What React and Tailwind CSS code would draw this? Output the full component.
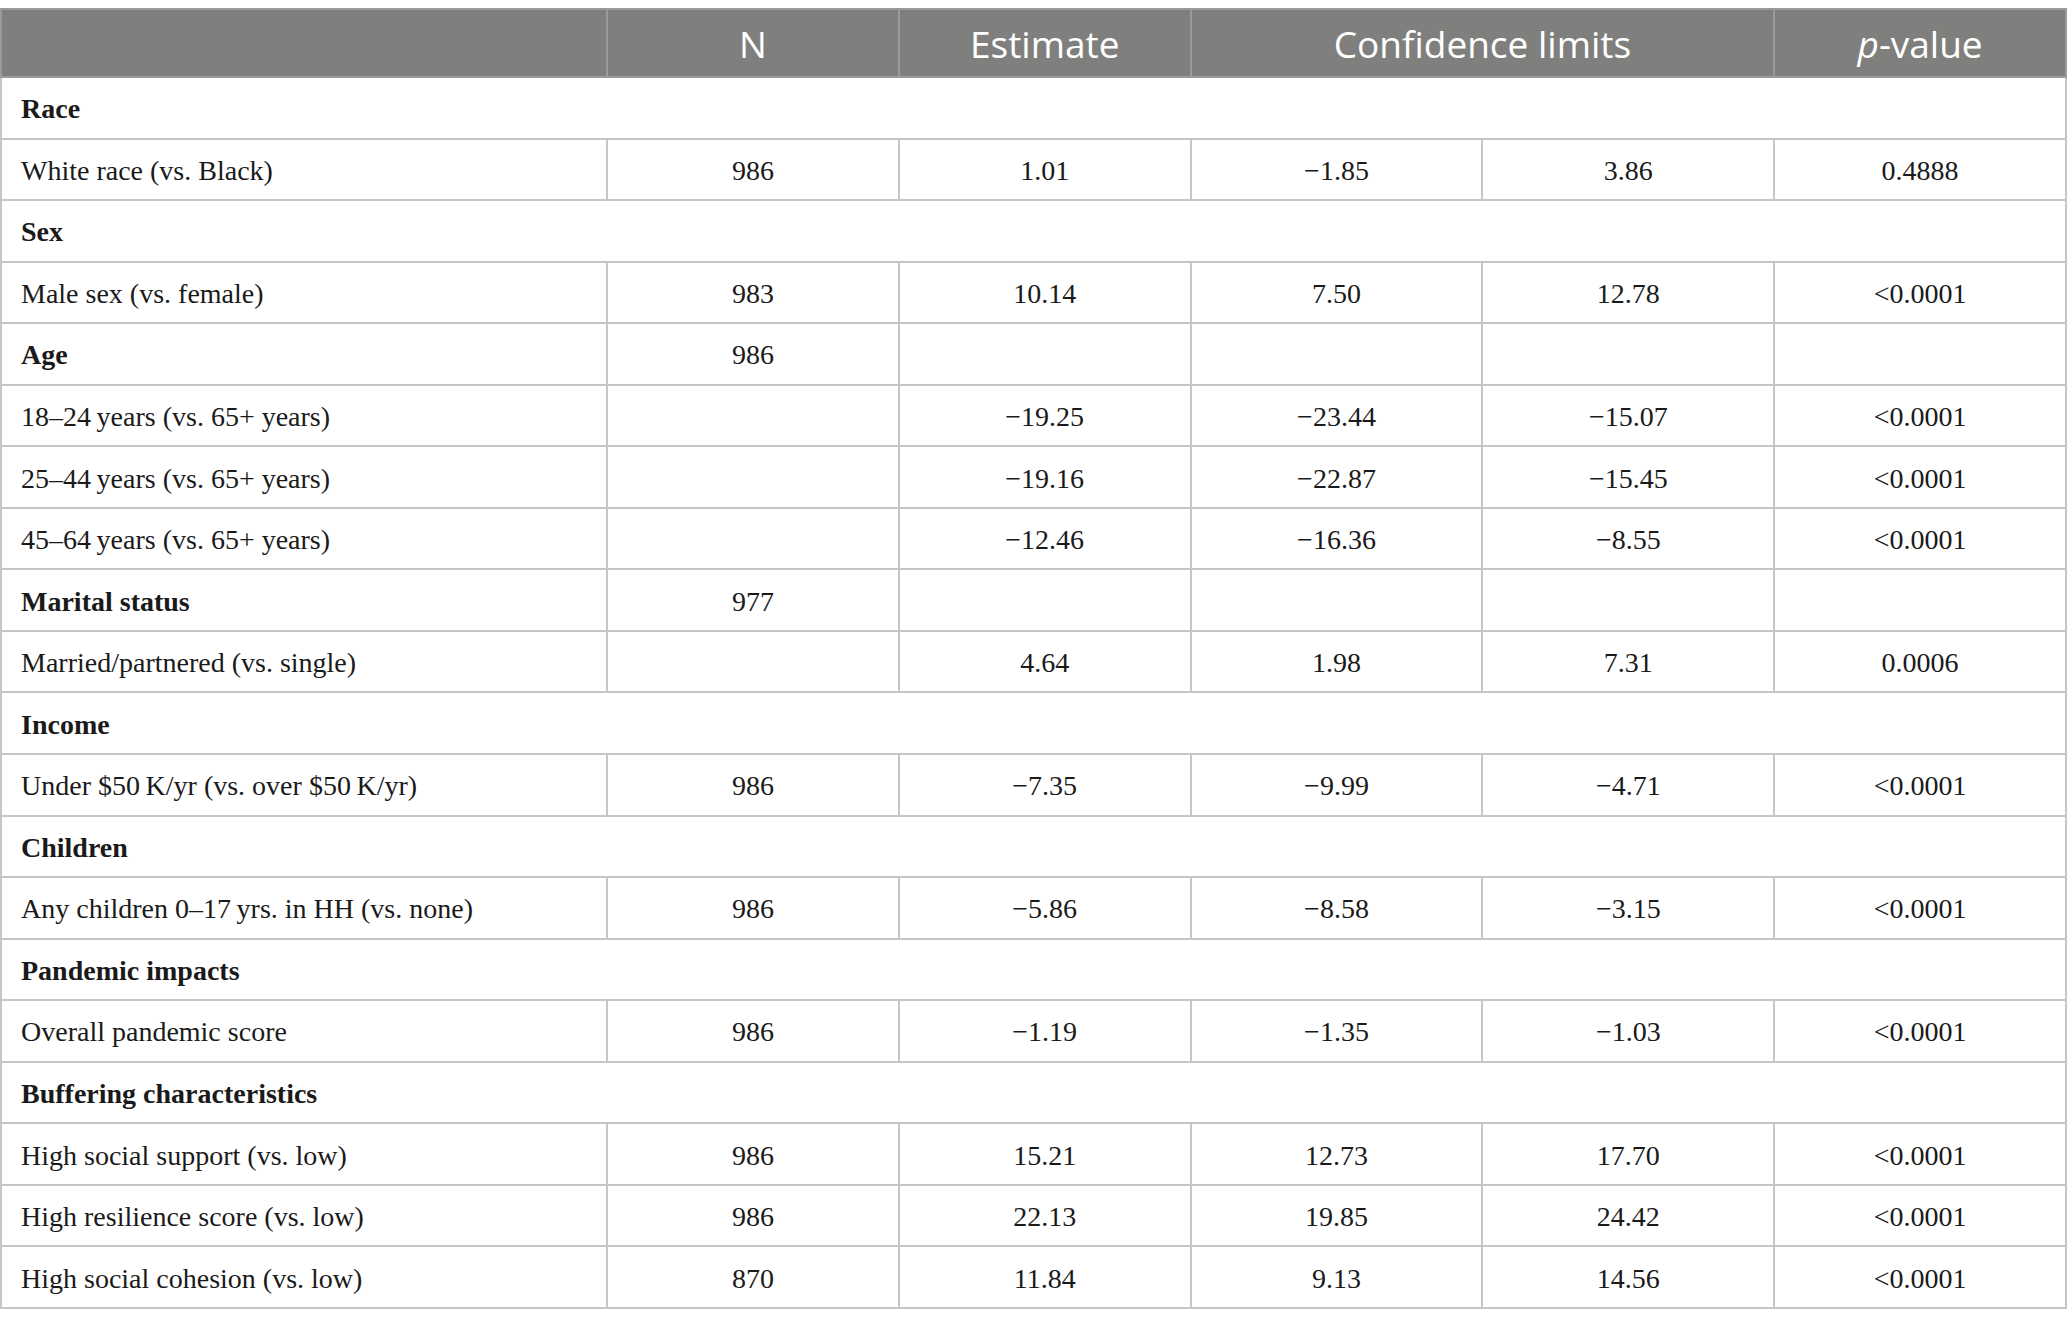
const rows = [
  { section: "Race" },
  { label: "White race (vs. Black)", n: "986", est: "1.01", lo: "\u22121.85", hi: "3.86", p: "0.4888" },
  { section: "Sex" },
  { label: "Male sex (vs. female)", n: "983", est: "10.14", lo: "7.50", hi: "12.78", p: "<0.0001" },
  { label: "Age", bold: true, n: "986", est: "", lo: "", hi: "", p: "" },
  { label: "18\u201324\u2009years (vs. 65+ years)", n: "", est: "\u221219.25", lo: "\u221223.44", hi: "\u221215.07", p: "<0.0001" },
  { label: "25\u201344\u2009years (vs. 65+ years)", n: "", est: "\u221219.16", lo: "\u221222.87", hi: "\u221215.45", p: "<0.0001" },
  { label: "45\u201364\u2009years (vs. 65+ years)", n: "", est: "\u221212.46", lo: "\u221216.36", hi: "\u22128.55", p: "<0.0001" },
  { label: "Marital status", bold: true, n: "977", est: "", lo: "", hi: "", p: "" },
  { label: "Married/partnered (vs. single)", n: "", est: "4.64", lo: "1.98", hi: "7.31", p: "0.0006" },
  { section: "Income" },
  { label: "Under $50\u2009K/yr (vs. over $50\u2009K/yr)", n: "986", est: "\u22127.35", lo: "\u22129.99", hi: "\u22124.71", p: "<0.0001" },
  { section: "Children" },
  { label: "Any children 0\u201317\u2009yrs. in HH (vs. none)", n: "986", est: "\u22125.86", lo: "\u22128.58", hi: "\u22123.15", p: "<0.0001" },
  { section: "Pandemic impacts" },
  { label: "Overall pandemic score", n: "986", est: "\u22121.19", lo: "\u22121.35", hi: "\u22121.03", p: "<0.0001" },
  { section: "Buffering characteristics" },
  { label: "High social support (vs. low)", n: "986", est: "15.21", lo: "12.73", hi: "17.70", p: "<0.0001" },
  { label: "High resilience score (vs. low)", n: "986", est: "22.13", lo: "19.85", hi: "24.42", p: "<0.0001" },
  { label: "High social cohesion (vs. low)", n: "870", est: "11.84", lo: "9.13", hi: "14.56", p: "<0.0001" },
];

const cell = "border-2 border-[#c6c6c6] text-center align-middle pt-[3px]";

export default function App() {
  return (
    <div className="min-h-screen bg-white pt-[8px]">
      <table
        className="w-full table-fixed border-collapse border-2 border-[#b4b4b4] text-[28px] leading-none text-[#1a1a1a]"
        style={{ fontFamily: '"Liberation Serif", "Times New Roman", serif' }}
      >
        <colgroup>
          <col className="w-[606px]" />
          <col />
          <col />
          <col />
          <col />
          <col />
        </colgroup>
        <thead>
          <tr
            className="h-[68px] bg-[#7f807e] text-white text-[37px] font-normal"
            style={{ fontFamily: '"Open Sans", "Noto Sans", sans-serif' }}
          >
            <th className="border-2 border-[#9a9a9a] font-normal" />
            <th className="border-2 border-[#9a9a9a] font-normal">N</th>
            <th className="border-2 border-[#9a9a9a] font-normal">Estimate</th>
            <th colSpan={2} className="border-2 border-[#9a9a9a] font-normal">Confidence limits</th>
            <th className="border-2 border-[#9a9a9a] font-normal">
              <span className="italic">p</span>-value
            </th>
          </tr>
        </thead>
        <tbody>
          {rows.map((r, i) =>
            r.section ? (
              <tr key={i} className="h-[61.55px]">
                <td colSpan={6} className="border-2 border-[#c6c6c6] pl-[19px] pt-[3px] font-bold align-middle">
                  {r.section}
                </td>
              </tr>
            ) : (
              <tr key={i} className="h-[61.55px]">
                <td className={`border-2 border-[#c6c6c6] pl-[19px] pt-[3px] align-middle ${r.bold ? "font-bold" : ""}`}>
                  {r.label}
                </td>
                <td className={cell}>{r.n}</td>
                <td className={cell}>{r.est}</td>
                <td className={cell}>{r.lo}</td>
                <td className={cell}>{r.hi}</td>
                <td className={cell}>{r.p}</td>
              </tr>
            )
          )}
        </tbody>
      </table>
    </div>
  );
}
